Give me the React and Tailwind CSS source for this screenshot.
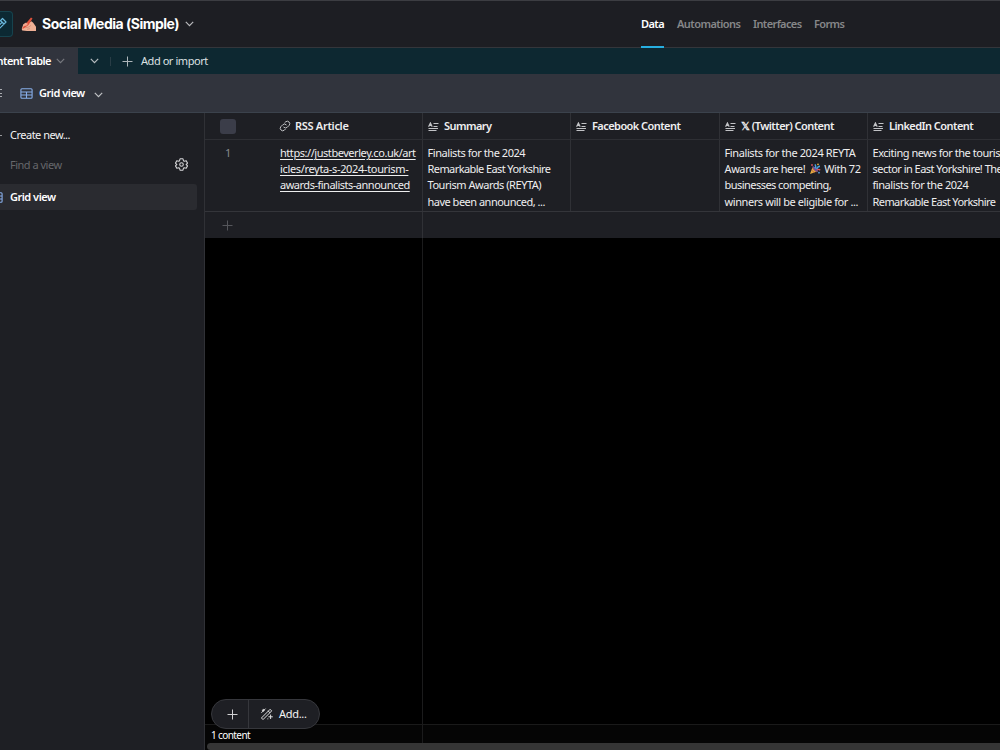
import React from "react";

const Chevron = ({ className = "" }) => (
  <svg viewBox="0 0 9 6" className={`h-[6px] w-[9px] shrink-0 ${className}`} fill="none" stroke="currentColor" strokeWidth="1.2">
    <path d="M0.8 0.9 4.5 4.6 8.2 0.9" />
  </svg>
);

const Plus = ({ className = "" }) => (
  <svg viewBox="0 0 11 11" className={`h-[11px] w-[11px] shrink-0 ${className}`} fill="none" stroke="currentColor" strokeWidth="1">
    <path d="M5.5 0.5v10M0.5 5.5h10" />
  </svg>
);

const GridIcon = ({ className = "" }) => (
  <svg viewBox="0 0 13 11" className={`h-[11px] w-[13px] shrink-0 text-[#87aee9] ${className}`} fill="none" stroke="currentColor" strokeWidth="1.1">
    <rect x="0.9" y="0.8" width="11.2" height="9.4" rx="1" />
    <path d="M1 4h11M1 7h11M6.5 4v6" />
  </svg>
);

const LongTextIcon = () => (
  <svg viewBox="0 0 11 9" className="h-[9px] w-[11px] shrink-0 text-[#c2c3c6]" fill="none" stroke="currentColor" strokeWidth="1">
    <path d="M0.6 4.8 2.4 1 4.200 4.800M1 3.500h2.800" strokeWidth="1.200" />
    <path d="M5.500 1.500h5M5.500 4.500h4M0.500 6.500h9.500M0.500 8.500h8" />
  </svg>
);

const LinkIcon = () => (
  <svg viewBox="0 0 24 24" className="h-[12px] w-[12px] shrink-0 text-[#c2c3c6]" fill="none" stroke="currentColor" strokeWidth="2" strokeLinecap="round">
    <path d="M9.5 14.5a5 5 0 0 0 7 0l4-4a5 5 0 0 0-7-7l-2 2M14.5 9.5a5 5 0 0 0-7 0l-4 4a5 5 0 0 0 7 7l2-2" />
  </svg>
);

const GearIcon = () => (
  <svg viewBox="0 0 24 24" className="h-[13px] w-[13px] shrink-0 text-[#d5d5d7]" fill="none" stroke="currentColor" strokeWidth="2" strokeLinejoin="round">
    <path d="M9.300 1.500h5.400l.9 3.500 1.500.9 3.500-1 2.600 4.600L20.700 12l2.500 2.500-2.600 4.600-3.500-1-1.500.9-.9 3.500H9.300L8.400 19l-1.500-.9-3.500 1L.8 14.500 3.300 12 .8 9.500l2.600-4.600 3.500 1L8.400 5Z" />
    <circle cx="12" cy="12" r="3.300" />
  </svg>
);

const WandIcon = () => (
  <svg viewBox="0 0 12 12" className="h-[12px] w-[12px] shrink-0 text-[#dedee0]" fill="none" stroke="currentColor" strokeWidth="1" strokeLinejoin="round" strokeLinecap="round">
    <path d="M0.700 9.700 9.100 1.300 10.700 2.900 2.300 11.300ZM7.300 3.100 8.900 4.700M0.700 4.500 4.300 0.900M9.600 7v3.600M7.800 8.800h3.600M2.300 1.300v2M1.300 2.300h2M6.800 10.800v.1" />
  </svg>
);

const WritingHand = () => (
  <svg viewBox="0 0 16 15" className="h-[15px] w-[16px] shrink-0">
    <path d="M0.700 12 2.200 7.600 4.500 5.800 7.500 6 10.500 4.200 12.200 5.800 15 9.800V14H6L1.200 13.500Z" fill="#efb095" />
    <path d="M4.200 10.800 8 10 9.900 8.400M6 12.300 9 11.600" stroke="#cf8b75" strokeWidth=".8" fill="none" />
    <path d="M10 0.500 11.500 1.500 7.500 8 3 11.300 1.300 12 2 10.300 5.800 5.500Z" fill="#e0523c" />
    <path d="M2.300 7.800 5 6 7 6.800 5.700 8.500 2.600 9.300Z" fill="#f0a68e" />
  </svg>
);

const PartyPopper = () => (
  <svg viewBox="0 0 12 12" className="mr-[1px] ml-px inline-block h-[12px] w-[12px] align-[-2px]">
    <path d="M1 11 3.500 4.300 8 8.600Z" fill="#e6ad3f" />
    <path d="M2.500 7 5.300 9.700M3.300 5 7.200 8.800" stroke="#ba5a49" strokeWidth=".9" />
    <path d="M3.500 3C5.500 3.300 9 6.500 9 9 6.300 8.700 3.600 5.700 3.500 3Z" fill="#744b96" />
    <path d="M6 5.200C7.300 3.900 6.800 2.600 6 1.300M7.600 6.300C8.300 3.900 9.500 3.300 11 3.200" stroke="#4aa1de" strokeWidth="1.400" fill="none" />
    <path d="M8 7c1-.8 2.200-.8 3.200.2" stroke="#df5560" strokeWidth="1.400" fill="none" />
    <circle cx="3" cy="2" r=".9" fill="#dc5360" />
    <circle cx="9" cy="1.300" r=".9" fill="#e9b640" />
    <circle cx="10" cy="9.700" r=".9" fill="#509cde" />
  </svg>
);

function Header() {
  return (
    <header className="flex h-12 items-center border-t border-b border-t-[#3c3d42] border-b-[#34363b] bg-[#1d1e23]">
      <div className="flex w-[641px] shrink-0 items-center">
        <div className="flex h-[26px] w-[13px] items-center justify-end overflow-hidden rounded-r-[4px] border border-l-0 border-[#17434e] bg-[#0c2933]">
          <svg viewBox="0 0 14 14" className="mr-[5px] h-[14px] w-[14px] shrink-0" fill="none" stroke="#69b7dc" strokeWidth="1.200" strokeLinejoin="round">
            <path d="M1 13 2 9 9.500 1.500 13 5 5.500 12.500ZM7.500 3.500 11 7M3.500 10.800 9.500 4.800" />
          </svg>
        </div>
        <div className="ml-[8px] flex"><WritingHand /></div>
        <h1 className="ml-[5px] w-[138px] whitespace-nowrap font-['Inter',sans-serif] text-[14px] leading-[20px] font-bold tracking-[-0.5px] text-white">Social Media (Simple)</h1>
        <Chevron className="ml-[5px] text-[#b9babd]" />
      </div>
      <nav className="flex h-full gap-[13px] text-[11px] leading-[46px] font-semibold tracking-[-0.560px] text-[#868789]">
        <span className="relative w-[23px] whitespace-nowrap text-white">Data<span className="absolute -bottom-px left-0 h-[2px] w-[23px] bg-[#27aee0]" /></span>
        <span className="w-[63px] whitespace-nowrap">Automations</span>
        <span className="w-[48px] whitespace-nowrap tracking-[-0.620px]">Interfaces</span>
        <span className="whitespace-nowrap tracking-[-0.650px]">Forms</span>
      </nav>
    </header>
  );
}

function TableTabs() {
  return (
    <div className="flex h-[26px] items-center bg-[#0d2831]">
      <div className="flex h-full w-[78px] items-center justify-end bg-[#31343d] pr-[13px]">
        <span className="whitespace-nowrap text-[11px] font-semibold tracking-[-0.550px] text-white">Content Table</span>
        <Chevron className="ml-[5px] text-[#77797f]" />
      </div>
      <Chevron className="ml-[12px] text-[#b7bdc0]" />
      <div className="ml-[11px] h-[9px] w-px bg-[#293d46]" />
      <Plus className="ml-[11px] text-[#aeb6ba]" />
      <span className="ml-[8px] whitespace-nowrap text-[11px] tracking-[-0.440px] text-[#dce0e2]">Add or import</span>
    </div>
  );
}

function Toolbar() {
  return (
    <div className="flex h-[39px] items-center border-b border-[#3b424c] bg-[#31343d]">
      <svg viewBox="0 0 2 10" className="h-[10px] w-[2px] text-[#aaacb1]" stroke="currentColor"><path d="M0 1.500h2M0 5.500h2M0 8.500h2" /></svg>
      <GridIcon className="ml-[18px]" />
      <span className="ml-[6px] w-[47px] whitespace-nowrap text-[11px] font-semibold tracking-[-0.480px] text-white">Grid view</span>
      <Chevron className="mt-[3px] ml-[8px] text-[#c0c2c5]" />
    </div>
  );
}

function Sidebar() {
  return (
    <aside className="w-[205px] shrink-0 border-r border-[#303136] bg-[#1e1f24] pt-[7px] text-[11px] tracking-[-0.500px]">
      <div className="flex h-[30px] items-center text-[#f2f2f3]">
        <span className="h-px w-[2px] bg-[#97989b]" />
        <span className="ml-[8px] whitespace-nowrap">Create new...</span>
      </div>
      <div className="flex h-[30px] items-center justify-between pl-[10px] pr-[16px] text-[#66676b]">
        <span className="whitespace-nowrap">Find a view</span>
        <span className="mb-[2px]"><GearIcon /></span>
      </div>
      <div className="mt-[4px] flex h-[26px] w-[197px] items-center overflow-hidden rounded-r-[3px] bg-[#2a2b30]">
        <GridIcon className="ml-[-10px]" />
        <span className="ml-[7px] whitespace-nowrap font-semibold text-white">Grid view</span>
      </div>
    </aside>
  );
}

const columns = ["Summary", "Facebook Content", "𝕏 (Twitter) Content", "LinkedIn Content"];

const cells = [
  [
    ["Finalists for the 2024", "tracking-[-0.440px]"],
    ["Remarkable East Yorkshire", "tracking-[-0.580px]"],
    ["Tourism Awards (REYTA)", "tracking-[-0.460px]"],
    ["have been announced, ...", "tracking-[-0.500px]"],
  ],
  [],
  [
    ["Finalists for the 2024 REYTA", "tracking-[-0.390px]"],
    [<>Awards are here! <PartyPopper /> With 72</>, "tracking-[-0.400px]"],
    ["businesses competing,", "tracking-[-0.540px]"],
    ["winners will be eligible for ...", "tracking-[-0.410px]"],
  ],
  [
    ["Exciting news for the tourism", "tracking-[-0.460px]"],
    ["sector in East Yorkshire! The", "tracking-[-0.520px]"],
    ["finalists for the 2024", "tracking-[-0.440px]"],
    ["Remarkable East Yorkshire", "tracking-[-0.580px]"],
  ],
];

const tracks = "grid-cols-[218px_148px_149px_148px_149px]";

function Table() {
  return (
    <div className="w-[812px] bg-[#1e1f24] text-[11px]">
      <div className={`grid h-[27px] ${tracks} border-b border-[#2e2f34] font-semibold text-[#eeeeef]`}>
        <div className="flex items-center border-r border-[#303136] pl-[15px]">
          <span className="h-[15px] w-[16px] rounded-[3px] bg-[#3b3d49]" />
          <span className="ml-[43px] flex"><LinkIcon /></span>
          <span className="ml-[4px] whitespace-nowrap">RSS Article</span>
        </div>
        {columns.map((name) => (
          <div key={name} className="flex items-center border-r border-[#303136] pl-[5px]">
            <LongTextIcon />
            <span className="ml-[5px] whitespace-nowrap tracking-[-0.560px]">{name}</span>
          </div>
        ))}
      </div>
      <div className={`grid h-[72px] ${tracks} border-b border-[#34353a] leading-[16.200px] text-[#eeeeef]`}>
        <div className="flex border-r border-[#303136] pt-[5px]">
          <span className="w-[46px] text-center text-[#888a8e]">1</span>
          <a className="ml-[29px] flex flex-col whitespace-nowrap underline underline-offset-2">
            <span className="tracking-[-0.450px]">https://justbeverley.co.uk/art</span>
            <span className="tracking-[-0.340px]">icles/reyta-s-2024-tourism-</span>
            <span className="tracking-[-0.490px]">awards-finalists-announced</span>
          </a>
        </div>
        {cells.map((lines, i) => (
          <div key={i} className="border-r border-[#303136] pt-[5px] pl-[4.500px]">
            {lines.map(([text, tracking], j) => <div key={j} className={`h-[16.200px] whitespace-nowrap ${tracking}`}>{text}</div>)}
          </div>
        ))}
      </div>
      <div className="flex h-[26px] w-[812px] items-center">
        <div className="flex h-full w-[218px] items-center border-r border-[#303136] pl-[17px]"><Plus className="text-[#55565b]" /></div>
      </div>
    </div>
  );
}

function Footer() {
  return (
    <div className="relative h-[26px] w-full shrink-0 border-t border-[#1a1a1a] bg-[#050505]">
      <div className="flex h-[18px] w-[218px] items-center border-r border-[#1b1b1c] pl-[6px] pt-[3px] text-[10px] tracking-[-0.600px] text-white">1 content</div>
      <div className="ml-[2px] h-[7px] rounded-l-full bg-[#353535]" />
      <div className="absolute -top-[26px] left-[6px] flex h-[30px] w-[109px] items-center rounded-full border border-[#36373c] bg-[#1e1f24] text-[11px] text-[#f4f4f5]">
        <div className="flex h-full w-[37px] items-center justify-center border-r border-[#36373c] pl-[4px]"><Plus className="text-[#d1d1d3]" /></div>
        <div className="ml-[12px] flex"><WandIcon /></div>
        <span className="ml-[6px] whitespace-nowrap">Add...</span>
      </div>
    </div>
  );
}

export default function App() {
  return (
    <div className="flex h-[750px] w-[1000px] flex-col overflow-hidden bg-black font-['Noto_Sans','Open_Sans',sans-serif] tracking-[-0.300px]">
      <Header />
      <TableTabs />
      <Toolbar />
      <div className="flex min-h-0 flex-1">
        <Sidebar />
        <main className="flex min-w-0 flex-1 flex-col overflow-hidden">
          <Table />
          <div className="w-[218px] flex-1 border-r border-[#1b1b1c]" />
          <Footer />
        </main>
      </div>
    </div>
  );
}
